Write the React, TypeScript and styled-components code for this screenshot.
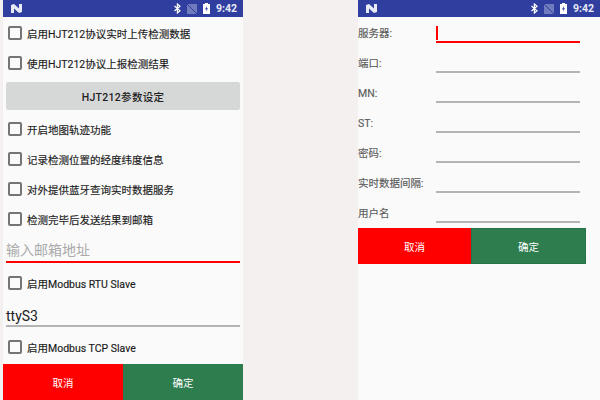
import React from "react"
import styled, {createGlobalStyle} from "styled-components"

const cjk = `"Roboto", "Noto Sans CJK SC", sans-serif`

const Global = createGlobalStyle`
	html, body {
		margin: 0;
		padding: 0;
		width: 600px;
		height: 400px;
		overflow: hidden;
		background: #f5f0f0;
		font-family: ${cjk};
	}
`

const Page = styled.div`
	display: flex;
	width: 600px;
	height: 400px;
	padding-left: 3px;
	box-sizing: border-box;
	gap: 115px;
`

const Phone = styled.div<{$wide?: boolean}>`
	width: ${p => (p.$wide ? "242px" : "240px")};
	height: 400px;
	background: #fafafa;
	display: flex;
	flex-direction: column;
	overflow: hidden;
`

const StatusBar = styled.div`
	height: 17px;
	flex: none;
	background: #303f9f;
	display: flex;
	align-items: center;
	padding: 0 6px 0 8px;
	color: #fff;
`

const StatusRight = styled.div`
	margin-left: auto;
	display: flex;
	align-items: center;
	gap: 6px;
`

const Clock = styled.span`
	font-size: 10.5px;
	font-weight: 700;
	color: #e8eaf6;
`

const Form = styled.div`
	padding: 1px 3px 0;
	display: flex;
	flex-direction: column;
`

const CheckRow = styled.label<{$gap?: number}>`
	height: 30px;
	display: flex;
	align-items: center;
	padding-left: 2px;
	font-size: 10.5px;
	color: #1a1a1a;
	-webkit-text-stroke: 0.15px #1a1a1a;
	margin-top: ${p => p.$gap || 0}px;
`

const Box = styled.span`
	width: 10px;
	height: 10px;
	border: 2px solid #757575;
	border-radius: 2px;
	margin-right: 5px;
	flex: none;
`

const GreyButton = styled.div`
	height: 28px;
	margin-top: 4px;
	margin-bottom: 4px;
	background: #d6d7d7;
	border-radius: 2px;
	display: flex;
	align-items: center;
	justify-content: center;
	font-size: 10.5px;
	font-weight: 500;
	color: #212121;
	letter-spacing: 0.3px;
`

const Input = styled.div<{$active?: boolean; $hint?: boolean}>`
	height: 29px;
	box-sizing: border-box;
	border-bottom: 2px solid ${p => (p.$active ? "#ff0000" : "#b4b4b4")};
	font-size: 14px;
	line-height: 26px;
	padding-top: ${p => (p.$hint ? "3px" : "5px")};
	color: ${p => (p.$hint ? "#aaaaaa" : "#212121")};
`

const Footer = styled.div<{$wide?: boolean}>`
	display: flex;
	height: 36px;
	flex: none;
	margin-top: ${p => (p.$wide ? "0" : "auto")};
	width: ${p => (p.$wide ? "228px" : "240px")};
`

const Action = styled.div<{$ok?: boolean; $outlined?: boolean}>`
	flex: 1 0 0;
	box-sizing: border-box;
	display: flex;
	align-items: center;
	justify-content: center;
	font-size: 10.5px;
	color: #fff;
	background: ${p => (p.$ok ? "#2e7d4f" : "#ff0000")};
	border: ${p => (p.$outlined ? "1px solid #27734a" : "none")};
`

const FieldList = styled.div`
	display: flex;
	flex-direction: column;
	padding-top: 1px;
	height: 211px;
	box-sizing: border-box;
	flex: none;
`

const FieldRow = styled.div`
	display: grid;
	grid-template-columns: 78px 144px;
	height: 30px;
`

const FieldLabel = styled.span`
	font-size: 10.5px;
	color: #5a5a5a;
	-webkit-text-stroke: 0.15px #5a5a5a;
	line-height: 32px;
`

const FieldLine = styled.div<{$active?: boolean}>`
	position: relative;
	height: 25px;
	box-sizing: border-box;
	border-bottom: 2px solid ${p => (p.$active ? "#ff0000" : "#b4b4b4")};

	${p => p.$active && `
		&::before {
			content: "";
			position: absolute;
			left: 0;
			top: 8px;
			width: 1.5px;
			height: 14px;
			background: #ff0000;
		}
	`}
`

const Status = () => (
	<StatusBar>
		<svg width="11" height="9" viewBox="0 0 11 9">
			<path d="M0 1 L3 0 L8 4.5 L8 0 L11 0 L11 8 L8 9 L3 4.5 L3 9 L0 9 Z" fill="#e8eaf6" />
		</svg>
		<StatusRight>
			<svg width="7" height="11" viewBox="0 0 7 11" fill="none" stroke="#fff" strokeWidth="1.2">
				<path d="M0.5 3 L6 7.8 L3.4 10 V1 L6 3.2 L0.5 8" />
			</svg>
			<svg width="10" height="10" viewBox="0 0 10 10">
				<path d="M0 0 H10 V10 H0 Z" fill="#6f7bbd" />
				<path d="M0 0 L10 10" stroke="#303f9f" strokeWidth="1" />
			</svg>
			<svg width="7" height="11" viewBox="0 0 7 11">
				<path d="M2 0 H5 V1 H7 V11 H0 V1 H2 Z" fill="#fff" />
				<path d="M4 3 L2 6.3 H3.3 L3 8.5 L5 5.2 H3.7 Z" fill="#303f9f" />
			</svg>
			<Clock>9:42</Clock>
		</StatusRight>
	</StatusBar>
)

const Check = ({children, gap}: {children: React.ReactNode; gap?: number}) => (
	<CheckRow $gap={gap}>
		<Box />
		{children}
	</CheckRow>
)

const fields = ["服务器:", "端口:", "MN:", "ST:", "密码:", "实时数据间隔:", "用户名"]

const App = () => {
	return (
		<Page>
			<Global />
			<Phone>
				<Status />
				<Form>
					<Check>启用HJT212协议实时上传检测数据</Check>
					<Check>使用HJT212协议上报检测结果</Check>
					<GreyButton>HJT212参数设定</GreyButton>
					<Check>开启地图轨迹功能</Check>
					<Check>记录检测位置的经度纬度信息</Check>
					<Check>对外提供蓝牙查询实时数据服务</Check>
					<Check>检测完毕后发送结果到邮箱</Check>
					<Input $active $hint>输入邮箱地址</Input>
					<Check gap={5}>启用Modbus RTU Slave</Check>
					<Input>ttyS3</Input>
					<Check gap={5}>启用Modbus TCP Slave</Check>
				</Form>
				<Footer>
					<Action>取消</Action>
					<Action $ok>确定</Action>
				</Footer>
			</Phone>
			<Phone $wide>
				<Status />
				<FieldList>
					{fields.map((f, i) => (
						<FieldRow key={f}>
							<FieldLabel>{f}</FieldLabel>
							<FieldLine $active={i === 0} />
						</FieldRow>
					))}
				</FieldList>
				<Footer $wide>
					<Action>取消</Action>
					<Action $ok $outlined>确定</Action>
				</Footer>
			</Phone>
		</Page>
	)
}

export default App
